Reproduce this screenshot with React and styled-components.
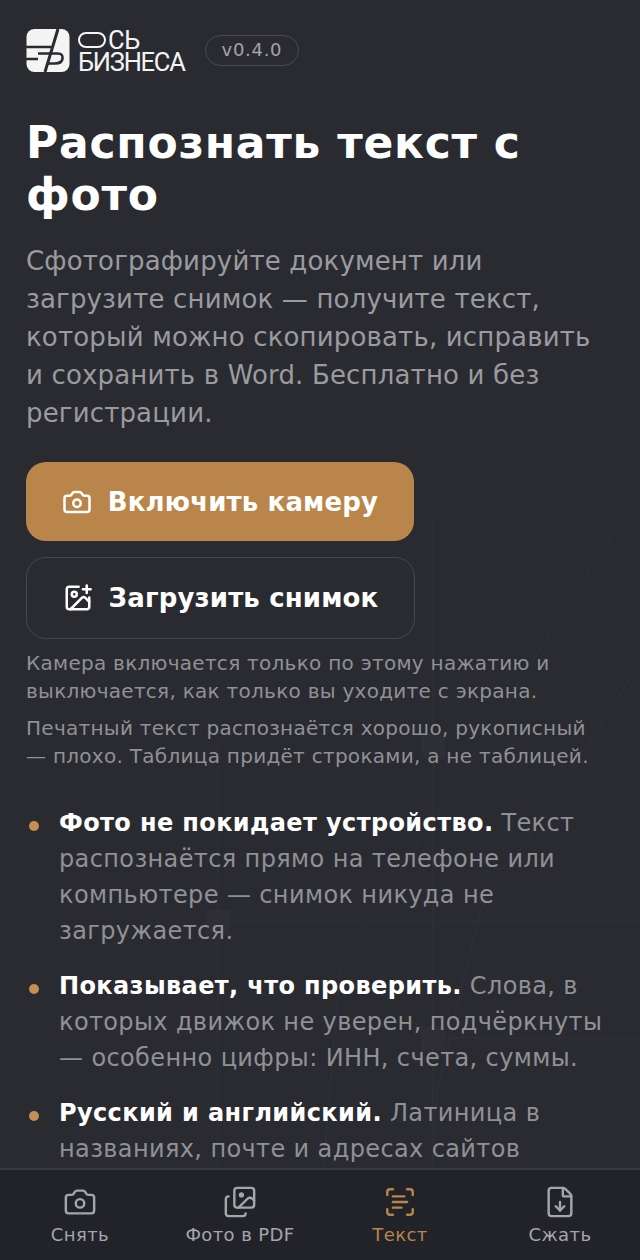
import React from "react";
import styled, {createGlobalStyle} from "styled-components";
import {Camera, ImagePlus, Images, ScanText, FileDown} from "lucide-react";

const GlobalStyle = createGlobalStyle`
    html, body {
        margin: 0;
        height: 1260px;
        overflow: hidden;
        background: #2a2b30;
    }
    * { box-sizing: border-box; }
`;

const Page = styled.div`
    position: relative;
    width: 640px;
    height: 1260px;
    overflow: hidden;
    padding: 29px 26px 0 26px;
    background: #2a2b30;
    color: #fff;
    font-family: "DejaVu Sans", sans-serif;
`;

const Backdrop = styled.svg`
    position: absolute;
    left: 0;
    top: 0;
    pointer-events: none;
`;

const Content = styled.div`
    position: relative;
`;

const Header = styled.header`
    display: flex;
    align-items: center;
    height: 43px;
`;

const Wordmark = styled.div`
    display: flex;
    flex-direction: column;
    margin-left: 8px;
    font-family: "Roboto", sans-serif;
    font-size: 25.5px;
    line-height: 22px;
    letter-spacing: -1.25px;
    color: #f4f4f4;
`;

const WordTop = styled.div`
    display: flex;
    align-items: center;
    gap: 2px;
    letter-spacing: -0.3px;
`;

const Ring = styled.span`
    width: 28px;
    height: 16px;
    border: 2.5px solid #f4f4f4;
    border-radius: 9px;
`;

const Version = styled.span`
    margin-left: 20px;
    padding: 0 16px;
    height: 31px;
    line-height: 27px;
    border: 1px solid #4a4b51;
    border-radius: 16px;
    font-size: 18px;
    letter-spacing: 0.7px;
    color: #a3a4a8;
`;

const Title = styled.h1`
    margin: 45px 0 0;
    font-size: 44px;
    line-height: 52px;
    letter-spacing: 0.75px;
    font-weight: 700;
    color: #fff;
`;

const Lead = styled.p`
    margin: 21px 0 0;
    font-size: 26px;
    line-height: 38px;
    letter-spacing: 0.16px;
    color: #9a9b9f;
`;

const Actions = styled.div`
    display: flex;
    flex-direction: column;
    align-items: flex-start;
    gap: 16px;
    margin-top: 30px;
`;

const Button = styled.button`
    display: flex;
    align-items: center;
    justify-content: center;
    gap: 16px;
    height: ${p => p.$primary ? "79px" : "82px"};
    width: ${p => p.$primary ? "388px" : "389px"};
    padding: 0;
    border: ${p => p.$primary ? "none" : "1px solid #47484e"};
    border-radius: 20px;
    background: ${p => p.$primary ? "#b9854a" : "transparent"};
    color: #fff;
    font-family: inherit;
    font-size: 26px;
    font-weight: 700;
    letter-spacing: 0.15px;
`;

const Note = styled.p`
    margin: ${p => p.$first ? "10px" : "9px"} 0 0;
    max-width: 575px;
    font-size: 20px;
    line-height: 28px;
    letter-spacing: 0.28px;
    color: #909195;
`;

const Points = styled.ul`
    margin: 35px 0 0;
    padding: 0;
    list-style: none;
    display: flex;
    flex-direction: column;
    gap: 19px;
`;

const Point = styled.li`
    display: grid;
    grid-template-columns: 33px 1fr;
    font-size: 24px;
    line-height: 36px;
    color: #909195;
    letter-spacing: 0.38px;
    strong {
        color: #fff;
        font-weight: 700;
    }
`;

const Dot = styled.span`
    width: 10px;
    height: 10px;
    margin: 16px 0 0 3px;
    border-radius: 50%;
    background: #c48f52;
`;

const BottomNav = styled.nav`
    position: fixed;
    left: 0;
    bottom: 0;
    width: 640px;
    height: 92px;
    display: grid;
    grid-template-columns: repeat(4, 1fr);
    background: #212328;
    border-top: 2px solid #3a3b40;
`;

const NavItem = styled.div`
    display: flex;
    flex-direction: column;
    align-items: center;
    padding-top: 15px;
    gap: 5px;
    font-size: 18px;
    line-height: 22px;
    letter-spacing: 0.4px;
    color: ${p => p.$active ? "#b9854a" : "#a5a6aa"};
`;

function Logo(){
    return(
        <svg width="44" height="43" viewBox="0 0 44 43">
            <rect x="0.5" y="0" width="43" height="43" rx="8" fill="#f4f4f4"/>
            <path d="M0 18H25M0 30H12M12 24.5H32Q37 24.5 36.5 29.5Q36 34.5 29 34.5H21" stroke="#2a2b30" strokeWidth="2.6" fill="none"/>
            <path d="M32 0L19 43" stroke="#2a2b30" strokeWidth="3" fill="none"/>
        </svg>
    );
}

function App(){
    return(
        <Page>
            <GlobalStyle/>
            <Backdrop width="640" height="1260" viewBox="0 0 640 1260" fill="none" stroke="#313237" strokeWidth="1">
                <path d="M433 520V1168M218 740V1168M218 922H640M433 1038H640"/>
                <path d="M613 532L340 969L323 1168M640 663L480 912L437 1091L432 1168"/>
                <rect x="206" y="910" width="24" height="24" fill="#2e2f34" stroke="none"/>
                <rect x="421" y="734" width="24" height="24" fill="#2e2f34" stroke="none"/>
                <rect x="421" y="1026" width="24" height="24" fill="#2e2f34" stroke="none"/>
            </Backdrop>
            <Content>
                <Header>
                    <Logo/>
                    <Wordmark>
                        <WordTop><Ring/>СЬ</WordTop>
                        <div>БИЗНЕСА</div>
                    </Wordmark>
                    <Version>v0.4.0</Version>
                </Header>
                <Title>Распознать текст с фото</Title>
                <Lead>Сфотографируйте документ или загрузите снимок — получите текст, который можно скопировать, исправить и сохранить в Word. Бесплатно и без регистрации.</Lead>
                <Actions>
                    <Button $primary><Camera size={30} strokeWidth={2}/>Включить камеру</Button>
                    <Button><ImagePlus size={30} strokeWidth={2}/>Загрузить снимок</Button>
                </Actions>
                <Note $first>Камера включается только по этому нажатию и выключается, как только вы уходите с экрана.</Note>
                <Note>Печатный текст распознаётся хорошо, рукописный — плохо. Таблица придёт строками, а не таблицей.</Note>
                <Points>
                    <Point><Dot/><div><strong>Фото не покидает устройство.</strong> Текст распознаётся прямо на телефоне или компьютере — снимок никуда не загружается.</div></Point>
                    <Point><Dot/><div><strong>Показывает, что проверить.</strong> Слова, в которых движок не уверен, подчёркнуты — особенно цифры: ИНН, счета, суммы.</div></Point>
                    <Point><Dot/><div><strong>Русский и английский.</strong> Латиница в названиях, почте и адресах сайтов распознаётся вместе с кириллицей.</div></Point>
                </Points>
            </Content>
            <BottomNav>
                <NavItem><Camera size={34} strokeWidth={1.7}/>Снять</NavItem>
                <NavItem><Images size={34} strokeWidth={1.7}/>Фото в PDF</NavItem>
                <NavItem $active><ScanText size={34} strokeWidth={1.7}/>Текст</NavItem>
                <NavItem><FileDown size={34} strokeWidth={1.7}/>Сжать</NavItem>
            </BottomNav>
        </Page>
    );
}

export default App;
